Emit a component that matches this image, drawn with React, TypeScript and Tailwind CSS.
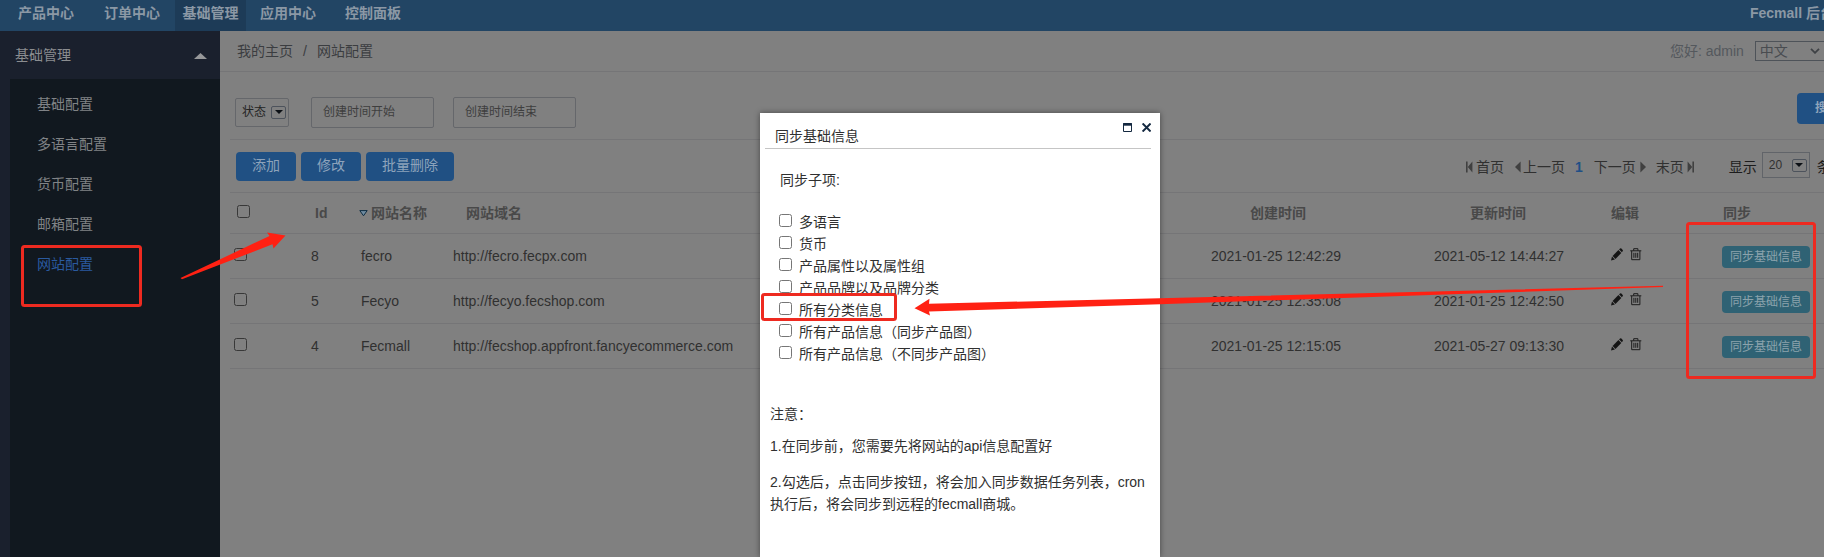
import React from "react";

const topNav = [
  { label: "产品中心", cls: "ml-[11px] w-[70px]" },
  { label: "订单中心", cls: "ml-4 w-[70px]" },
  { label: "基础管理", cls: "ml-[8px] w-[71px] bg-[#1d3b57]" },
  { label: "应用中心", cls: "ml-[7px] w-[70px]" },
  { label: "控制面板", cls: "ml-[15px] w-[70px]" },
];
const sideItems = ["基础配置", "多语言配置", "货币配置", "邮箱配置", "网站配置"];
const rows = [
  { id: "8", name: "fecro", url: "http://fecro.fecpx.com", created: "2021-01-25 12:42:29", updated: "2021-05-12 14:44:27" },
  { id: "5", name: "Fecyo", url: "http://fecyo.fecshop.com", created: "2021-01-25 12:35:08", updated: "2021-01-25 12:42:50" },
  { id: "4", name: "Fecmall", url: "http://fecshop.appfront.fancyecommerce.com", created: "2021-01-25 12:15:05", updated: "2021-05-27 09:13:30" },
];
const options = [
  "多语言",
  "货币",
  "产品属性以及属性组",
  "产品品牌以及品牌分类",
  "所有分类信息",
  "所有产品信息（同步产品图）",
  "所有产品信息（不同步产品图）",
];
const columns = "grid grid-cols-[77px_50px_92px_758px_223px_177px_111px_100px] pl-[4px]";

function Box({ className }: { className: string }) {
  return <span className={"block size-[13px] shrink-0 rounded-[2.5px] border " + className} />;
}

function DropMark() {
  return (
    <span className="flex h-[13px] w-[15px] shrink-0 items-center justify-center rounded-[2px] border border-[#4d535c]">
      <svg width="8" height="4" viewBox="0 0 8 4"><path d="M0 0h8L4 4z" fill="#0c1015" /></svg>
    </span>
  );
}

function Pencil() {
  return (
    <svg width="12" height="13" viewBox="0 0 12 13" fill="#151515">
      <path d="M0 12.5 1 8.6 3.9 11.6z" />
      <path d="M1.6 7.9 7.4 2.1 10.3 5 4.5 10.9z" />
      <path d="M8.1 1.4 9 .5Q9.7 0 10.4.6L11.7 1.9Q12.2 2.6 11.6 3.3L10.9 4.2z" />
    </svg>
  );
}

function Trash() {
  return (
    <svg width="12" height="13" viewBox="0 0 12 13" fill="none" stroke="#1c1c1c">
      <path d="M.3 2.8h11M3.7 2.6V.7h4.2v1.9M1.7 3v8.7h8.2V3M3.9 4.8v5M5.8 4.8v5M7.7 4.8v5" />
    </svg>
  );
}

function PageEdge({ flip = false }: { flip?: boolean }) {
  return (
    <svg width="7" height="12" viewBox="0 0 7 12" className={flip ? "-scale-x-100" : ""} fill="#404040">
      <path d="M0 .5h1.6v11H0zM6.4.5v11L1.8 6z" />
    </svg>
  );
}

function PageArrow({ flip = false }: { flip?: boolean }) {
  return (
    <svg width="6" height="12" viewBox="0 0 6 12" className={flip ? "-scale-x-100" : ""} fill="#404040">
      <path d="M5.6.5v11L0 6z" />
    </svg>
  );
}

function Sidebar() {
  return (
    <aside className="flex w-[220px] shrink-0 flex-col bg-[#1a202d]">
      <div className="flex h-12 items-center justify-between pr-[13px] pl-[15px] text-[#8b8d90]">
        <span>基础管理</span>
        <svg width="13" height="6" viewBox="0 0 13 6" className="mt-0.5"><path d="M6.5 0 13 6H0z" fill="#969799" /></svg>
      </div>
      <ul className="ml-[10px] flex-1 bg-[#11181f] pt-[5px] pl-[27px] text-[#808386]">
        {sideItems.map((t) => (
          <li key={t} className={t === "网站配置" ? "h-10 leading-10 text-[#2a5a9f]" : "h-10 leading-10"}>{t}</li>
        ))}
      </ul>
    </aside>
  );
}

function Content() {
  return (
    <main className="w-[1620px] shrink-0 bg-[#808080] text-[#303030]">
      <div className="flex h-[41px] items-center border-b border-[#757577] pl-[17px] text-[#3b3d40]">
        <span>我的主页</span>
        <span className="mx-[10px]">/</span>
        <span>网站配置</span>
        <span className="ml-[1297px] text-[#54585d]">您好: admin</span>
        <span className="ml-[11px] flex h-5 w-[75px] shrink-0 items-center border border-[#4e5359] pl-1 text-[#494c50]">
          中文
          <svg width="10" height="6" viewBox="0 0 10 6" className="ml-[22px]" fill="none" stroke="#3e4145" strokeWidth="1.8"><path d="m1 .8 4 4 4-4" /></svg>
        </span>
      </div>
      <div className="ml-[10px]">
        <div className="flex h-[68px] items-center border-b border-[#757577] pt-[13px] pl-[5px] text-xs text-[#3e3e3e]">
          <span className="flex h-[29px] w-[54px] shrink-0 items-center justify-between rounded-[2px] border border-[#65676b] pr-[2px] pl-[6px] text-[#242424]">
            状态<DropMark />
          </span>
          <span className="ml-[22px] flex h-[31px] w-[123px] shrink-0 items-center rounded-[2px] border border-[#65676b] pb-[1px] pl-[11px]">创建时间开始</span>
          <span className="ml-[19px] flex h-[31px] w-[123px] shrink-0 items-center rounded-[2px] border border-[#65676b] pb-[1px] pl-[11px]">创建时间结束</span>
          <span className="ml-[1221px] flex h-[31px] w-[70px] shrink-0 -translate-y-1 items-center rounded-[4px] bg-[#205083] pl-[18px] font-bold text-[#8fa4bb]">搜索</span>
        </div>
        <div className="flex h-[53px] items-center border-b border-[#757577] pl-[6px]">
          <div className="flex shrink-0 gap-[5px] text-[#8da3bb]">
            <span className="flex h-[29px] w-[60px] items-center justify-center rounded-[4px] bg-[#205083] pb-[2px]">添加</span>
            <span className="flex h-[29px] w-[60px] items-center justify-center rounded-[4px] bg-[#205083] pb-[2px]">修改</span>
            <span className="flex h-[29px] w-[88px] items-center justify-center rounded-[4px] bg-[#205083] pb-[2px]">批量删除</span>
          </div>
          <div className="ml-[1012px] flex shrink-0 items-center pt-[2px] whitespace-nowrap">
            <PageEdge /><span className="ml-[3px]">首页</span>
            <span className="ml-[11px]"><PageArrow /></span><span className="ml-[2px]">上一页</span>
            <b className="ml-[10px] text-[#1f4f86]">1</b>
            <span className="ml-[11px]">下一页</span><span className="ml-[4px]"><PageArrow flip /></span>
            <span className="ml-[10px]">末页</span><span className="ml-[3px]"><PageEdge flip /></span>
            <span className="ml-[35px] text-[#1c1c1c]">显示</span>
            <span className="ml-[5px] -mt-[4px] flex h-[26px] w-[48px] items-center justify-between border border-[#616469] pr-[2px] pl-[6px] text-xs"><span>20</span><DropMark /></span>
            <span className="ml-[7px] text-[#1c1c1c]">条</span>
          </div>
        </div>
        <div className={columns + " h-[41px] items-center border-b border-[#757577] font-bold text-[#494949]"}>
          <Box className="-mt-1 ml-[3px] border-[#383838]" />
          <span className="ml-1">Id</span>
          <span className="-ml-[2px] flex items-center gap-[3px]">
            <svg width="9" height="7" viewBox="0 0 9 7" fill="#6f8ba0" stroke="#0f2d42"><path d="M.8.6h7.4L4.5 5.8z" /></svg>
            网站名称
          </span>
          <span className="ml-[13px]">网站域名</span>
          <span className="ml-[39px]">创建时间</span>
          <span className="ml-[36px]">更新时间</span>
          <span>编辑</span>
          <span className="ml-[1px]">同步</span>
        </div>
        {rows.map((r) => (
          <div key={r.id} className={columns + " h-[45px] items-center border-b border-[#757577]"}>
            <Box className="-mt-1 border-[#383838]" />
            <span>{r.id}</span>
            <span>{r.name}</span>
            <span>{r.url}</span>
            <span>{r.created}</span>
            <span>{r.updated}</span>
            <span className="-mt-1 flex gap-[7px]"><Pencil /><Trash /></span>
            <span className="mt-[2px] flex h-[22px] w-[88px] items-center justify-center rounded-[4px] bg-[#2f6274] text-xs text-[#8ba3ac]">同步基础信息</span>
          </div>
        ))}
      </div>
    </main>
  );
}

function SyncDialog() {
  return (
    <section className="absolute top-[113px] left-[760px] h-[444px] w-[400px] bg-white text-[#303030] shadow-[0_0_6px_rgba(0,0,0,0.45)]">
      <div className="mr-[9px] ml-[5px] flex h-9 justify-between border-b border-[#c5c5c5] pl-[10px]">
        <span className="pt-[13px]">同步基础信息</span>
        <span className="mt-[10px] flex gap-[10px]">
          <svg width="9" height="9" viewBox="0 0 9 9" fill="none" stroke="#142840"><path d="M.5.5h8v8h-8z" /><path d="M0 1.5h9" strokeWidth="2.4" /></svg>
          <svg width="9" height="9" viewBox="0 0 9 9" fill="none" stroke="#142840" strokeWidth="2"><path d="m.6.5 8 8M8.6.5l-8 8" /></svg>
        </span>
      </div>
      <div className="mt-[20px] ml-5 leading-[22px]">同步子项:</div>
      <ul className="mt-[20px] ml-[19px]">
        {options.map((t) => (
          <li key={t} className="flex h-[22px] items-center gap-[7px]">
            <Box className="-mt-1 border-[#767676] bg-white" />
            {t}
          </li>
        ))}
      </ul>
      <div className="ml-[10px] w-[378px] leading-[22px]">
        <p className="mt-[38px]">注意：</p>
        <p className="mt-[10px]">1.在同步前，您需要先将网站的api信息配置好</p>
        <p className="mt-[14px]">2.勾选后，点击同步按钮，将会加入同步数据任务列表，cron<br />执行后，将会同步到远程的fecmall商城。</p>
      </div>
    </section>
  );
}

function Marks() {
  return (
    <svg className="absolute inset-0" width="1824" height="557" viewBox="0 0 1824 557">
      <g fill="none" stroke="#ee2a20" strokeWidth="3">
        <rect x="22.5" y="246.5" width="118" height="59" rx="2" />
        <rect x="762.5" y="294.5" width="133" height="25" rx="2" />
        <rect x="1687.5" y="223.5" width="127" height="154" rx="2" />
      </g>
      <g fill="#ff2113">
        <path d="M180.5 278 269.5 236 267 232.5 285.5 235.5 273.5 248.5 272.5 244.3 182 279.3Z" />
        <path d="M1663 285.8 929 303.8 929.5 298.7 914.5 308.3 930 315.5 929 311.5 1160 304.2 1663 287Z" />
      </g>
    </svg>
  );
}

export default function App() {
  return (
    <div className="relative flex h-[557px] w-[1824px] flex-col overflow-hidden whitespace-nowrap font-['Liberation_Sans','Noto_Sans_CJK_SC',sans-serif] text-sm leading-5">
      <header className="flex h-[31px] shrink-0 bg-[#224564] font-bold text-[#8b98a5]">
        {topNav.map((n) => (
          <span key={n.label} className={n.cls + " flex shrink-0 items-center justify-center pb-[6px]"}>{n.label}</span>
        ))}
        <span className="ml-[1342px] flex shrink-0 items-center pb-[6px]">Fecmall 后台</span>
      </header>
      <div className="flex min-h-0 flex-1">
        <Sidebar />
        <Content />
      </div>
      <SyncDialog />
      <Marks />
    </div>
  );
}
